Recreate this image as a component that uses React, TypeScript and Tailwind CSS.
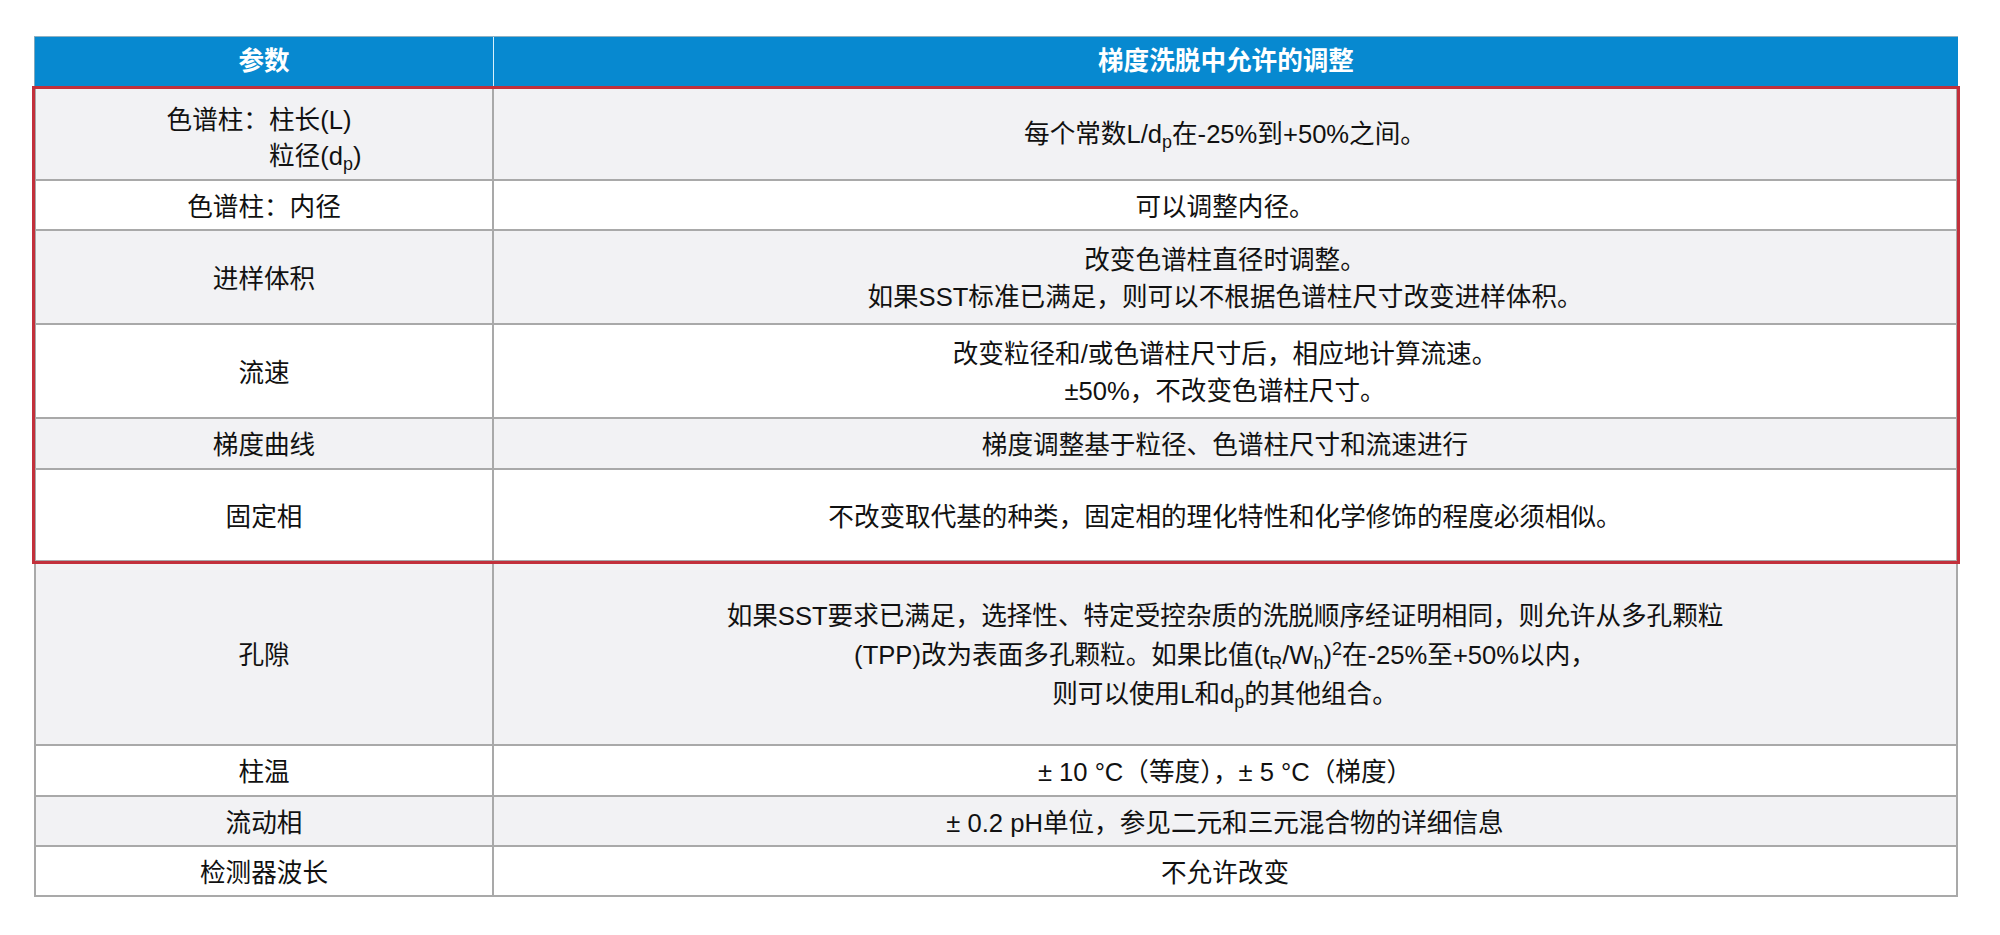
import React from "react";

const font = '"Liberation Sans", "Noto Sans CJK SC", sans-serif';

function Sub({ children }: { children: React.ReactNode }) {
  return <sub className="text-[0.7em] bottom-[-0.3em]">{children}</sub>;
}

type RowProps = {
  h: string;
  gray?: boolean;
  left: React.ReactNode;
  right: React.ReactNode;
  leftClass?: string;
};

function Row({ h, gray, left, right, leftClass }: RowProps) {
  const bg = gray ? "bg-[#f2f2f4]" : "bg-white";
  return (
    <div className={`grid grid-cols-[460px_1464px] ${h}`}>
      <div
        className={`${bg} flex items-center justify-center border-l-2 border-r-2 border-b-2 border-[#a9a9a9] text-center pt-[4px] ${leftClass ?? ""}`}
      >
        {left}
      </div>
      <div
        className={`${bg} flex items-center justify-center border-r-2 border-b-2 border-[#a9a9a9] text-center pt-[4px]`}
      >
        {right}
      </div>
    </div>
  );
}

export default function App() {
  return (
    <div
      className="w-[2000px] h-[935px] bg-white pt-[36px] pl-[34px] text-[25.6px] leading-[37px] text-[#111]"
      style={{ fontFamily: font }}
    >
      <div className="w-[1924px]">
        {/* header */}
        <div className="grid grid-cols-[460px_1464px] h-[50px] bg-[#0789d0] border-t border-[#8fb1c2] text-white font-bold text-[25.6px]">
          <div className="flex items-center justify-center border-r border-[#d8f1fb] border-l border-l-[#7fa8bd]">
            参数
          </div>
          <div className="flex items-center justify-center">梯度洗脱中允许的调整</div>
        </div>

        {/* highlighted group */}
        <div className="relative">
          <div className="absolute left-[-2px] right-[-2px] top-0 bottom-[-2px] border-[3px] border-[#c2303b] z-10 pointer-events-none" />
          <Row
            h="h-[95px]"
            gray
            leftClass="pt-[10px]"
            left={
              <div className="text-left leading-[36px]">
                <div>色谱柱：柱长(L)</div>
                <div className="pl-[4em]">
                  粒径(d<Sub>p</Sub>)
                </div>
              </div>
            }
            right={
              <div>
                每个常数L/d<Sub>p</Sub>在-25%到+50%之间。
              </div>
            }
          />
          <Row h="h-[50px]" left={<div>色谱柱：内径</div>} right={<div>可以调整内径。</div>} />
          <Row
            h="h-[94px]"
            gray
            left={<div>进样体积</div>}
            right={
              <div>
                <div>改变色谱柱直径时调整。</div>
                <div>如果SST标准已满足，则可以不根据色谱柱尺寸改变进样体积。</div>
              </div>
            }
          />
          <Row
            h="h-[94px]"
            left={<div>流速</div>}
            right={
              <div>
                <div>改变粒径和/或色谱柱尺寸后，相应地计算流速。</div>
                <div>±50%，不改变色谱柱尺寸。</div>
              </div>
            }
          />
          <Row
            h="h-[51px]"
            gray
            left={<div>梯度曲线</div>}
            right={<div>梯度调整基于粒径、色谱柱尺寸和流速进行</div>}
          />
          <Row
            h="h-[92px]"
            left={<div>固定相</div>}
            right={<div>不改变取代基的种类，固定相的理化特性和化学修饰的程度必须相似。</div>}
          />
        </div>

        <Row
          h="h-[184px]"
          gray
          left={<div>孔隙</div>}
          right={
            <div className="leading-[39px]">
              <div>如果SST要求已满足，选择性、特定受控杂质的洗脱顺序经证明相同，则允许从多孔颗粒</div>
              <div>
                (TPP)改为表面多孔颗粒。如果比值(t<Sub>R</Sub>/W<Sub>h</Sub>)<sup className="text-[0.7em]">2</sup>在-25%至+50%以内，
              </div>
              <div>
                则可以使用L和d<Sub>p</Sub>的其他组合。
              </div>
            </div>
          }
        />
        <Row h="h-[51px]" left={<div>柱温</div>} right={<div>± 10 °C（等度），± 5 °C（梯度）</div>} />
        <Row
          h="h-[50px]"
          gray
          left={<div>流动相</div>}
          right={<div>± 0.2 pH单位，参见二元和三元混合物的详细信息</div>}
        />
        <Row h="h-[50px]" left={<div>检测器波长</div>} right={<div>不允许改变</div>} />
      </div>
    </div>
  );
}
